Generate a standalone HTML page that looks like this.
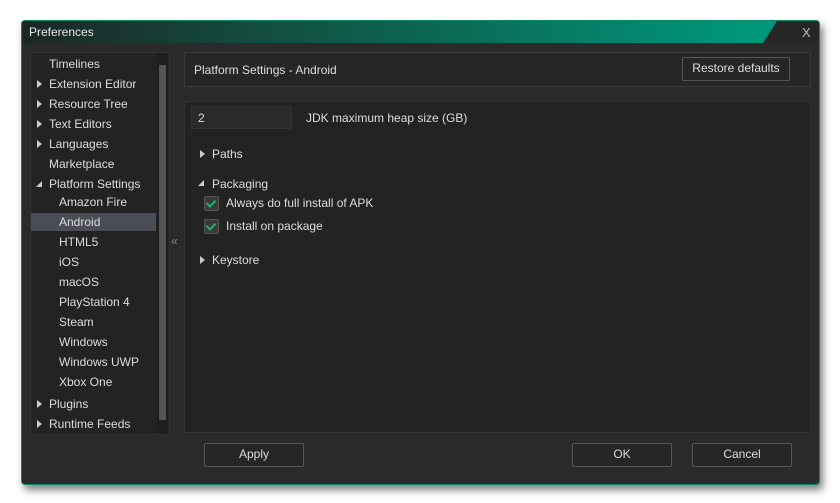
<!DOCTYPE html>
<html><head><style>
body{margin:0;width:840px;height:503px;background:#fff;position:relative;overflow:hidden;font-family:"Liberation Sans",sans-serif;font-size:12px;color:#ddd}
.win{position:absolute;left:21px;top:20px;width:799px;height:465px;background:#2a2a2a;border:1px solid #0d8a6a;border-radius:4px;box-shadow:3px 5px 8px rgba(0,0,0,.5);box-sizing:border-box;overflow:hidden}
.title{position:absolute;left:0;top:0;width:799px;height:22px;background:linear-gradient(90deg,#1c2624 0%,#0f5a48 40%,#00967a 90%,#00967a 100%)}
.ttl{position:absolute;left:7px;top:4px;color:#e8e8e8;font-size:12px}
.close{position:absolute;left:741px;top:0;width:58px;height:22px;background:#262626;clip-path:polygon(14px 0,100% 0,100% 100%,0 100%)}
.x{position:absolute;left:780px;top:4px;color:#bbb;font-size:13px}
.tree{position:absolute;left:8px;top:31px;width:138px;height:381px;background:#232323;border:1px solid #333}
.it{position:absolute;left:0;height:18px;line-height:18px;width:125px;color:#ddd}
.sel{background:#4a4d55}
.ar{position:absolute;left:6px;top:5px;width:0;height:0;border-left:5px solid #ccc;border-top:4px solid transparent;border-bottom:4px solid transparent}
.ad{position:absolute;left:5px;top:6px;width:0;height:0;border-right:6px solid #ccc;border-top:6px solid transparent}
.sb{position:absolute;left:126px;top:0;width:11px;height:381px;background:#1e1e1e}
.th{position:absolute;left:2px;top:12px;width:7px;height:355px;background:#555}
.hdr{position:absolute;left:162px;top:31px;width:627px;height:35px;background:#262626;border:1px solid #3a3a3a;box-sizing:border-box}
.btn{position:absolute;border:1px solid #555;border-radius:2px;background:#262626;color:#ddd;text-align:center;box-sizing:border-box;line-height:21px}
.pan{position:absolute;left:162px;top:80px;width:627px;height:332px;background:#232323;border:1px solid #333;box-sizing:border-box}
.cb{position:absolute;width:13px;height:13px;background:#3a3a3a;border:1px solid #555;border-radius:2px}
.cb:after{content:"";position:absolute;left:3px;top:1px;width:4px;height:7px;border:solid #1fb36a;border-width:0 2px 2px 0;transform:rotate(45deg)}
</style></head><body>
<div class="win">
<div class="title"></div><span class="ttl">Preferences</span><div class="close"></div><span class="x">X</span>
<div class="tree">
<div class="it" style="top:2px"><span style="margin-left:18px">Timelines</span></div>
<div class="it" style="top:22px"><i class="ar"></i><span style="margin-left:18px">Extension Editor</span></div>
<div class="it" style="top:42px"><i class="ar"></i><span style="margin-left:18px">Resource Tree</span></div>
<div class="it" style="top:62px"><i class="ar"></i><span style="margin-left:18px">Text Editors</span></div>
<div class="it" style="top:82px"><i class="ar"></i><span style="margin-left:18px">Languages</span></div>
<div class="it" style="top:102px"><span style="margin-left:18px">Marketplace</span></div>
<div class="it" style="top:122px"><i class="ad"></i><span style="margin-left:18px">Platform Settings</span></div>
<div class="it" style="top:140px"><span style="margin-left:28px">Amazon Fire</span></div>
<div class="it sel" style="top:160px"><span style="margin-left:28px">Android</span></div>
<div class="it" style="top:180px"><span style="margin-left:28px">HTML5</span></div>
<div class="it" style="top:200px"><span style="margin-left:28px">iOS</span></div>
<div class="it" style="top:220px"><span style="margin-left:28px">macOS</span></div>
<div class="it" style="top:240px"><span style="margin-left:28px">PlayStation 4</span></div>
<div class="it" style="top:260px"><span style="margin-left:28px">Steam</span></div>
<div class="it" style="top:280px"><span style="margin-left:28px">Windows</span></div>
<div class="it" style="top:300px"><span style="margin-left:28px">Windows UWP</span></div>
<div class="it" style="top:320px"><span style="margin-left:28px">Xbox One</span></div>
<div class="it" style="top:342px"><i class="ar"></i><span style="margin-left:18px">Plugins</span></div>
<div class="it" style="top:362px"><i class="ar"></i><span style="margin-left:18px">Runtime Feeds</span></div>
<div class="sb"><div class="th"></div></div>
</div>
<div style="position:absolute;left:149px;top:213px;color:#888;font-size:12px">«</div>
<div class="hdr"><span style="position:absolute;left:9px;top:10px">Platform Settings - Android</span>
<div class="btn" style="left:497px;top:4px;width:108px;height:24px">Restore defaults</div></div>
<div class="pan">
<div style="position:absolute;left:6px;top:4px;width:101px;height:23px;background:#2a2a2a;border:1px solid #333;box-sizing:border-box"><span style="position:absolute;left:6px;top:4px">2</span></div>
<span style="position:absolute;left:121px;top:9px">JDK maximum heap size (GB)</span>
<i class="ar" style="left:15px;top:48px"></i><span style="position:absolute;left:27px;top:45px">Paths</span>
<i class="ad" style="left:13px;top:78px"></i><span style="position:absolute;left:27px;top:75px">Packaging</span>
<div class="cb" style="left:19px;top:94px"></div><span style="position:absolute;left:41px;top:94px">Always do full install of APK</span>
<div class="cb" style="left:19px;top:117px"></div><span style="position:absolute;left:41px;top:117px">Install on package</span>
<i class="ar" style="left:15px;top:154px"></i><span style="position:absolute;left:27px;top:151px">Keystore</span>
</div>
<div class="btn" style="left:182px;top:422px;width:100px;height:24px">Apply</div>
<div class="btn" style="left:550px;top:422px;width:100px;height:24px">OK</div>
<div class="btn" style="left:670px;top:422px;width:100px;height:24px">Cancel</div>
</div>
</body></html>
